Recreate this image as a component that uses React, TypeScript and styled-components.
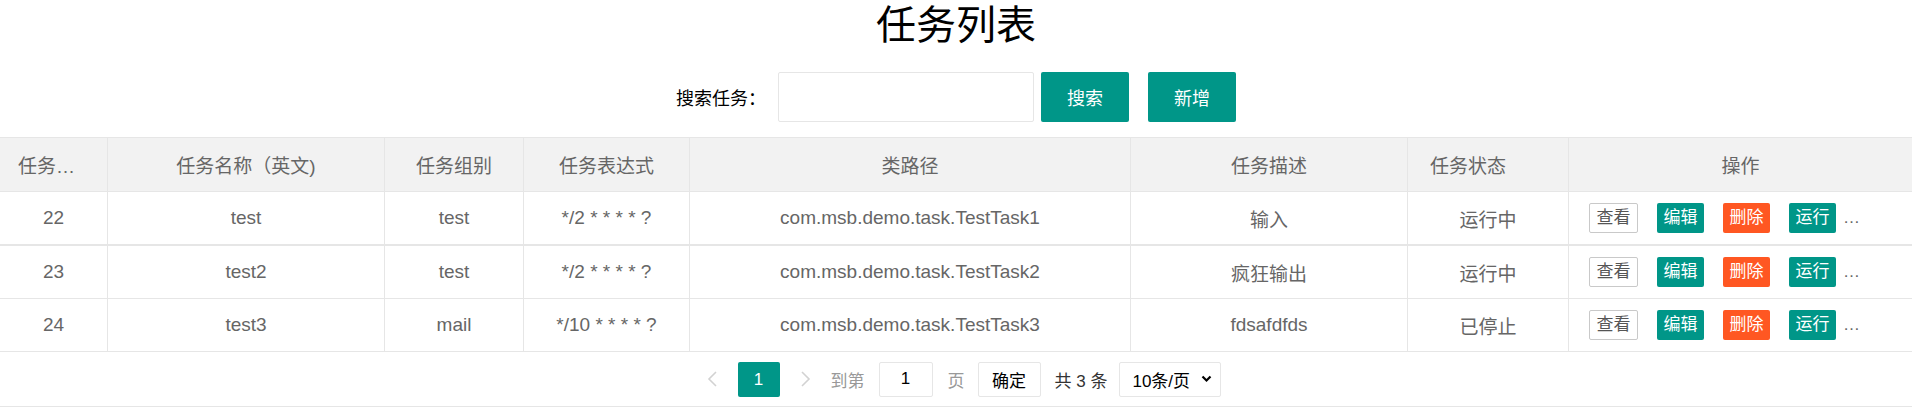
import styled, { createGlobalStyle } from 'styled-components'

const GlobalStyle = createGlobalStyle`
  * {
    box-sizing: border-box;
  }
  body {
    margin: 0;
    background: #fff;
    font-family: "Liberation Sans", "Noto Sans CJK SC", sans-serif;
  }
`

const COLS = '108px 277px 139px 166px 441px 277px 161px 1fr'

const Page = styled.div`
  width: 1912px;
`

const Title = styled.h1`
  margin: 0;
  height: 50px;
  line-height: 50px;
  font-size: 40px;
  font-weight: 400;
  color: #000;
  text-align: center;
`

const SearchBar = styled.div`
  display: flex;
  justify-content: center;
  align-items: center;
  margin-top: 22px;
  height: 50px;
`

const Label = styled.span`
  font-size: 18px;
  color: #000;
  margin-right: 12px;
`

const SearchInput = styled.input`
  width: 256px;
  height: 50px;
  border: 1px solid #e6e6e6;
  border-radius: 2px;
  outline: none;
  padding: 0 10px;
  font-size: 18px;
`

const MainButton = styled.button<{ $gap: number }>`
  width: 88px;
  height: 50px;
  margin-left: ${(p) => p.$gap}px;
  border: none;
  border-radius: 2px;
  background: #009688;
  color: #fff;
  font-family: inherit;
  font-size: 18px;
  cursor: pointer;
`

const Table = styled.div`
  margin-top: 15px;
  border-top: 1px solid #e6e6e6;
  color: #666;
  font-size: 19px;
`

const Row = styled.div<{ $head?: boolean; $height: number; $line?: number }>`
  display: grid;
  grid-template-columns: ${COLS};
  height: ${(p) => p.$height}px;
  background: ${(p) => (p.$head ? '#f2f2f2' : '#fff')};
  border-bottom: ${(p) => p.$line ?? 1}px solid #e6e6e6;
`

const Cell = styled.div<{ $shift?: number }>`
  display: flex;
  align-items: center;
  justify-content: center;
  min-width: 0;
  padding: 0 ${(p) => 18 + (p.$shift ?? 0)}px 0 18px;
  border-right: 1px solid #e6e6e6;
  white-space: nowrap;
  &:last-child {
    border-right: none;
  }
`

const Clip = styled.span`
  display: block;
  overflow: hidden;
  text-overflow: ellipsis;
  white-space: nowrap;
  max-width: 100%;
`

const ActionCell = styled.div`
  display: flex;
  align-items: center;
  padding-left: 20px;
  min-width: 0;
  overflow: hidden;
`

const SmallButton = styled.span<{ $kind: 'plain' | 'normal' | 'danger' }>`
  display: inline-block;
  height: 30px;
  line-height: ${(p) => (p.$kind === 'plain' ? 28 : 30)}px;
  padding: 0 6.5px;
  border-radius: 2px;
  font-size: 17px;
  color: ${(p) => (p.$kind === 'plain' ? '#555' : '#fff')};
  background: ${(p) =>
    p.$kind === 'plain' ? '#fff' : p.$kind === 'danger' ? '#ff5722' : '#009688'};
  border: ${(p) => (p.$kind === 'plain' ? '1px solid #c9c9c9' : 'none')};
  & + & {
    margin-left: 19px;
  }
`

const More = styled.span`
  margin-left: 7px;
  font-size: 17px;
  color: #666;
`

const Pager = styled.div`
  display: flex;
  justify-content: center;
  align-items: center;
  height: 55px;
  padding-right: 4px;
  border-bottom: 1px solid #e6e6e6;
  font-size: 17px;
  color: #333;
`

const Arrow = styled.svg`
  width: 11px;
  height: 16px;
  margin: 0 20px;
`

const PageNum = styled.span`
  width: 42px;
  height: 35px;
  line-height: 35px;
  text-align: center;
  background: #009688;
  color: #fff;
  border-radius: 2px;
`

const Muted = styled.span<{ $mr: number }>`
  color: #999;
  margin-right: ${(p) => p.$mr}px;
`

const Box = styled.span<{ $w: number; $mr: number }>`
  display: flex;
  align-items: center;
  justify-content: center;
  width: ${(p) => p.$w}px;
  height: 35px;
  margin-right: ${(p) => p.$mr}px;
  border: 1px solid #e6e6e6;
  border-radius: 2px;
  color: #000;
`

const Total = styled.span`
  margin-right: 12px;
  color: #333;
`

const SelectBox = styled.span`
  display: flex;
  align-items: center;
  justify-content: space-between;
  width: 102px;
  height: 35px;
  padding: 0 8px 0 12px;
  border: 1px solid #e6e6e6;
  border-radius: 2px;
  color: #000;
`

const headers = ['任务编号', '任务名称（英文)', '任务组别', '任务表达式', '类路径', '任务描述', '任务状态', '操作']

const rows = [
  { id: 22, name: 'test', group: 'test', cron: '*/2 * * * * ?', cls: 'com.msb.demo.task.TestTask1', desc: '输入', status: '运行中' },
  { id: 23, name: 'test2', group: 'test', cron: '*/2 * * * * ?', cls: 'com.msb.demo.task.TestTask2', desc: '疯狂输出', status: '运行中' },
  { id: 24, name: 'test3', group: 'mail', cron: '*/10 * * * * ?', cls: 'com.msb.demo.task.TestTask3', desc: 'fdsafdfds', status: '已停止' },
]

const Chevron = ({ dir }: { dir: 'left' | 'right' }) => (
  <Arrow viewBox="0 0 11 16">
    <polyline
      points={dir === 'left' ? '9,1 2,8 9,15' : '2,1 9,8 2,15'}
      fill="none"
      stroke="#d2d2d2"
      strokeWidth="1.6"
    />
  </Arrow>
)

const App = () => {
  return (
    <Page>
      <GlobalStyle />
      <Title>任务列表</Title>
      <SearchBar>
        <Label>搜索任务：</Label>
        <SearchInput />
        <MainButton $gap={7}>搜索</MainButton>
        <MainButton $gap={19}>新增</MainButton>
      </SearchBar>
      <Table>
        <Row $head $height={54}>
          {headers.map((h, i) => (
            <Cell key={h} $shift={i === 6 ? 40 : 0}>
              <Clip>{h}</Clip>
            </Cell>
          ))}
        </Row>
        {rows.map((r, i) => (
          <Row key={r.id} $height={i === 0 ? 54 : 53} $line={i === 0 ? 2 : 1}>
            <Cell>{r.id}</Cell>
            <Cell>{r.name}</Cell>
            <Cell>{r.group}</Cell>
            <Cell>{r.cron}</Cell>
            <Cell>{r.cls}</Cell>
            <Cell>{r.desc}</Cell>
            <Cell>{r.status}</Cell>
            <ActionCell>
              <SmallButton $kind="plain">查看</SmallButton>
              <SmallButton $kind="normal">编辑</SmallButton>
              <SmallButton $kind="danger">删除</SmallButton>
              <SmallButton $kind="normal">运行</SmallButton>
              <More>…</More>
            </ActionCell>
          </Row>
        ))}
        <Pager>
          <Chevron dir="left" />
          <PageNum>1</PageNum>
          <Chevron dir="right" />
          <Muted $mr={14}>到第</Muted>
          <Box $w={54} $mr={15}>1</Box>
          <Muted $mr={13}>页</Muted>
          <Box $w={63} $mr={14}>确定</Box>
          <Total>共 3 条</Total>
          <SelectBox>
            10条/页
            <svg width="11" height="8" viewBox="0 0 11 8">
              <polyline points="1.5,1.5 5.5,5.5 9.5,1.5" fill="none" stroke="#000" strokeWidth="2.2" />
            </svg>
          </SelectBox>
        </Pager>
      </Table>
    </Page>
  )
}

export default App
